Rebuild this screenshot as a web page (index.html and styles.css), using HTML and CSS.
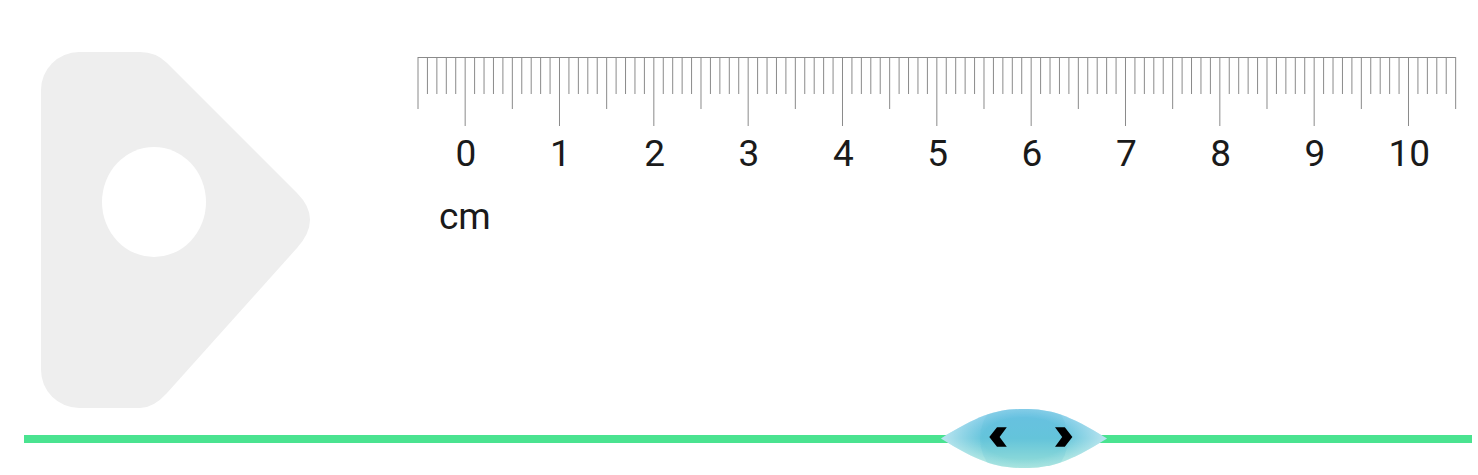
FILE: index.html
```html
<!DOCTYPE html>
<html>
<head>
<meta charset="utf-8">
<link rel="stylesheet" href="styles.css">
</head>
<body>
<div class="page">
  <div class="top">
    <svg class="tag" width="270" height="358" viewBox="40 51 270 358">
      <path class="tag-body" d="M79 52 H140 Q156 52 167 63 L297 193 Q323 219 297 248 L167 393 Q153.5 408 140 408 H79 A38 38 0 0 1 41 370 V90 A38 38 0 0 1 79 52 Z"/>
      <ellipse class="tag-hole" cx="154" cy="202" rx="52" ry="55"/>
    </svg>
    <div class="ruler">
      <svg class="scale" width="1040" height="72" viewBox="417.33 56 1040 72">
        <g transform="translate(418.33 0) scale(9.4333 1)">
          <path class="tick" d="M0 57.5 H110"/>
          <path class="tick minor" d="M1 57v37m1-37v37m1-37v37m1-37v37m2-37v37m1-37v37m1-37v37m1-37v37m2-37v37m1-37v37m1-37v37m1-37v37m2-37v37m1-37v37m1-37v37m1-37v37m2-37v37m1-37v37m1-37v37m1-37v37m2-37v37m1-37v37m1-37v37m1-37v37m2-37v37m1-37v37m1-37v37m1-37v37m2-37v37m1-37v37m1-37v37m1-37v37m2-37v37m1-37v37m1-37v37m1-37v37m2-37v37m1-37v37m1-37v37m1-37v37m2-37v37m1-37v37m1-37v37m1-37v37m2-37v37m1-37v37m1-37v37m1-37v37m2-37v37m1-37v37m1-37v37m1-37v37m2-37v37m1-37v37m1-37v37m1-37v37m2-37v37m1-37v37m1-37v37m1-37v37m2-37v37m1-37v37m1-37v37m1-37v37m2-37v37m1-37v37m1-37v37m1-37v37m2-37v37m1-37v37m1-37v37m1-37v37m2-37v37m1-37v37m1-37v37m1-37v37m2-37v37m1-37v37m1-37v37m1-37v37m2-37v37m1-37v37m1-37v37m1-37v37m2-37v37m1-37v37m1-37v37m1-37v37m2-37v37m1-37v37m1-37v37m1-37v37"/>
          <path class="tick half" d="M0 57v52m10-52v52m10-52v52m10-52v52m10-52v52m10-52v52m10-52v52m10-52v52m10-52v52m10-52v52m10-52v52m10-52v52"/>
          <path class="tick major" d="M5 57v69m10-69v69m10-69v69m10-69v69m10-69v69m10-69v69m10-69v69m10-69v69m10-69v69m10-69v69m10-69v69"/>
        </g>
      </svg>
      <div class="labels">
        <span class="lbl">0</span><span class="lbl">1</span><span class="lbl">2</span><span class="lbl">3</span><span class="lbl">4</span><span class="lbl">5</span><span class="lbl">6</span><span class="lbl">7</span><span class="lbl">8</span><span class="lbl">9</span><span class="lbl">10</span>
      </div>
      <div class="unit">cm</div>
    </div>
  </div>
  <div class="slider">
    <div class="track"></div>
    <svg class="handle" width="166" height="61" viewBox="941 408 166 61">
      <defs>
        <linearGradient id="hv" x1="0" y1="0" x2="0" y2="1">
          <stop offset="0" stop-color="#6cc2e6"/>
          <stop offset="0.5" stop-color="#68c6dc"/>
          <stop offset="1" stop-color="#a8e8da"/>
        </linearGradient>
        <radialGradient id="hr" gradientUnits="userSpaceOnUse" cx="1024" cy="438.5" r="83" gradientTransform="translate(1024 438.5) scale(1 0.5) translate(-1024 -438.5)">
          <stop offset="0" stop-color="#ffffff" stop-opacity="0"/>
          <stop offset="0.5" stop-color="#ffffff" stop-opacity="0"/>
          <stop offset="1" stop-color="#ffffff" stop-opacity="0.55"/>
        </radialGradient>
        <clipPath id="lensclip">
          <path d="M941 438.5 C980 414 998 409 1024 409 C1050 409 1068 414 1107 438.5 C1068 463 1050 468 1024 468 C998 468 980 463 941 438.5 Z"/>
        </clipPath>
      </defs>
      <g clip-path="url(#lensclip)">
        <rect x="941" y="408" width="166" height="61" fill="url(#hv)"/>
        <rect x="941" y="408" width="166" height="61" fill="url(#hr)"/>
        <circle cx="1024" cy="438.5" r="44" fill="#4fbcd4" fill-opacity="0.16"/>
      </g>
      <polygon class="chev" points="997,427.3 1006.8,427.3 999.6,437 1006.8,446.8 997,446.8 989.3,437"/>
      <polygon class="chev" points="1055,427.3 1064.8,427.3 1072.4,437 1064.8,446.8 1055,446.8 1062.2,437"/>
    </svg>
  </div>
</div>
</body>
</html>
```

FILE: styles.css
```css
html, body {
  margin: 0;
  padding: 0;
  background: #ffffff;
}

.page {
  width: 1478px;
  height: 475px;
  display: flex;
  flex-direction: column;
  font-family: Roboto, "Liberation Sans", sans-serif;
  color: #1a1a1a;
  overflow: hidden;
}

.top {
  display: flex;
  align-items: flex-start;
  padding-top: 51px;
  padding-left: 40px;
}

.tag {
  display: block;
  flex: none;
}

.tag-body {
  fill: #eeeeee;
}

.tag-hole {
  fill: #ffffff;
}

.ruler {
  margin-left: 107.33px;
  padding-top: 5px;
  width: 1040px;
}

.scale {
  display: block;
}

.tick {
  fill: none;
  stroke: #8a8a8a;
  stroke-width: 1;
  vector-effect: non-scaling-stroke;
}

.labels {
  display: flex;
  margin-left: 1.5px;
  margin-top: 7px;
}

.lbl {
  width: 94.33px;
  flex: none;
  text-align: center;
  font-size: 37px;
  line-height: 37px;
}

.unit {
  margin-top: 26px;
  margin-left: 21.67px;
  font-size: 37px;
  line-height: 37px;
}

.slider {
  position: relative;
  margin-top: 26px;
  padding-left: 24px;
}

.track {
  width: 1448px;
  height: 8px;
  background: #4ae390;
}

.handle {
  position: absolute;
  left: 941px;
  top: -27px;
  display: block;
}

.chev {
  fill: #000000;
}
```
